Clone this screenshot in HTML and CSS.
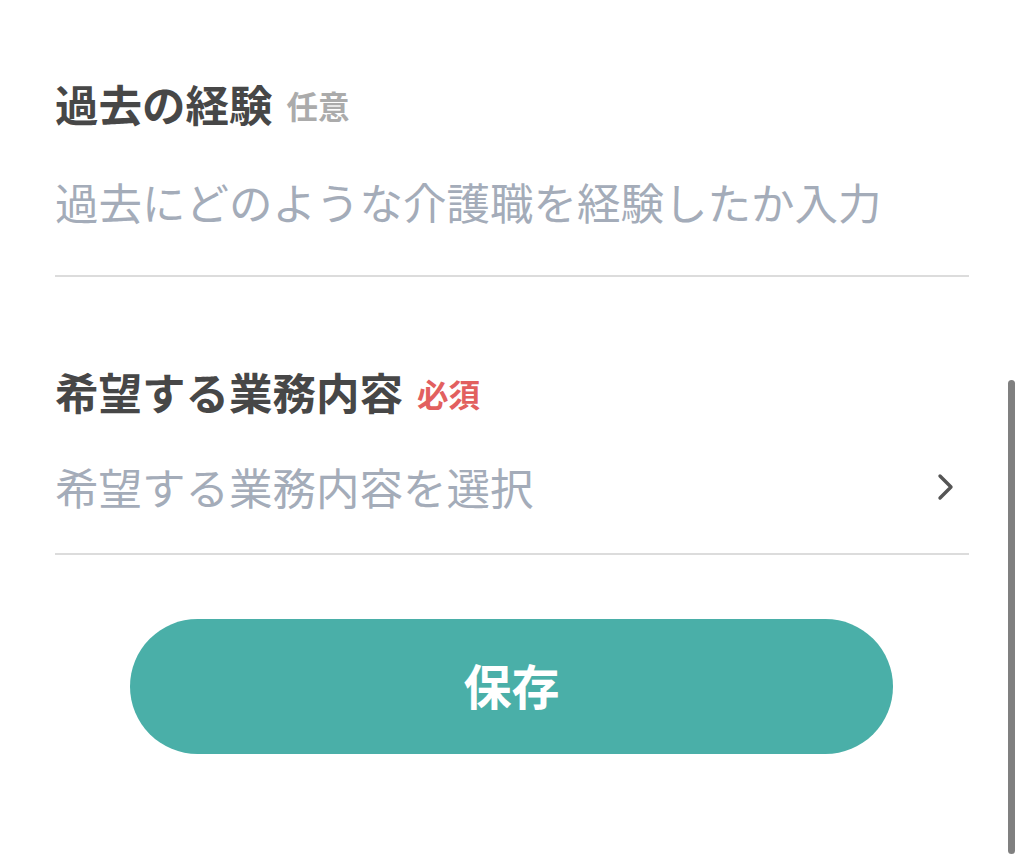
FILE: index.html
```html
<!DOCTYPE html>
<html lang="ja">
<head>
<meta charset="utf-8">
<link rel="stylesheet" href="styles.css">
</head>
<body>
<div class="page">
  <section class="field field-first">
    <div class="label-row">
      <span class="label">過去の経験</span>
      <span class="tag tag-optional">任意</span>
    </div>
    <div class="input-row">
      <span class="placeholder">過去にどのような介護職を経験したか入力</span>
    </div>
  </section>
  <section class="field field-second">
    <div class="label-row">
      <span class="label">希望する業務内容</span>
      <span class="tag tag-required">必須</span>
    </div>
    <div class="input-row select-row">
      <span class="placeholder">希望する業務内容を選択</span>
      <svg class="chevron" width="22" height="30" viewBox="0 0 22 30" aria-hidden="true">
        <path d="M5 4 L16 15 L5 26" fill="none" stroke="#555" stroke-width="3.4" stroke-linecap="round" stroke-linejoin="round"/>
      </svg>
    </div>
  </section>
  <div class="actions">
    <button class="save">保存</button>
  </div>
</div>
<div class="scrollbar"></div>
</body>
</html>
```
FILE: styles.css
```css
html, body {
  margin: 0;
  padding: 0;
  background: #ffffff;
}
body {
  width: 1024px;
  height: 863px;
  overflow: hidden;
  position: relative;
  font-family: "Noto Sans CJK JP", "Noto Sans", sans-serif;
}
.page {
  padding: 0 55px;
}
.field {
  border-bottom: 2px solid #dcdcdc;
}
.field-first {
  padding-top: 74px;
  padding-bottom: 43px;
}
.field-second {
  padding-top: 85px;
  padding-bottom: 36px;
}
.label-row {
  display: flex;
  align-items: center;
  height: 60px;
}
.label {
  font-size: 43.5px;
  font-weight: 700;
  color: #474747;
  line-height: 60px;
}
.tag {
  font-size: 31.5px;
  font-weight: 700;
  margin-left: 14px;
  line-height: 60px;
  position: relative;
  top: 1px;
}
.tag-optional {
  color: #ababab;
}
.tag-required {
  color: #e2605f;
}
.input-row {
  display: flex;
  align-items: center;
  height: 60px;
}
.field-first .input-row {
  margin-top: 38px;
}
.field-second .input-row {
  margin-top: 35px;
}
.placeholder {
  font-size: 43.5px;
  font-weight: 400;
  color: #a4acb9;
  line-height: 60px;
}
.select-row {
  justify-content: space-between;
}
.chevron {
  margin-right: 12px;
}
.actions {
  padding-top: 64px;
  padding-left: 75px;
}
.save {
  display: block;
  width: 763px;
  height: 135px;
  border: none;
  border-radius: 68px;
  background: #4aafa8;
  color: #ffffff;
  font-family: "Noto Sans CJK JP", "Noto Sans", sans-serif;
  font-size: 48px;
  font-weight: 700;
  padding: 0 0 6px 0;
}
.scrollbar {
  position: absolute;
  left: 1008px;
  top: 380px;
  width: 7px;
  height: 474px;
  border-radius: 4px;
  background: #808080;
}
```
